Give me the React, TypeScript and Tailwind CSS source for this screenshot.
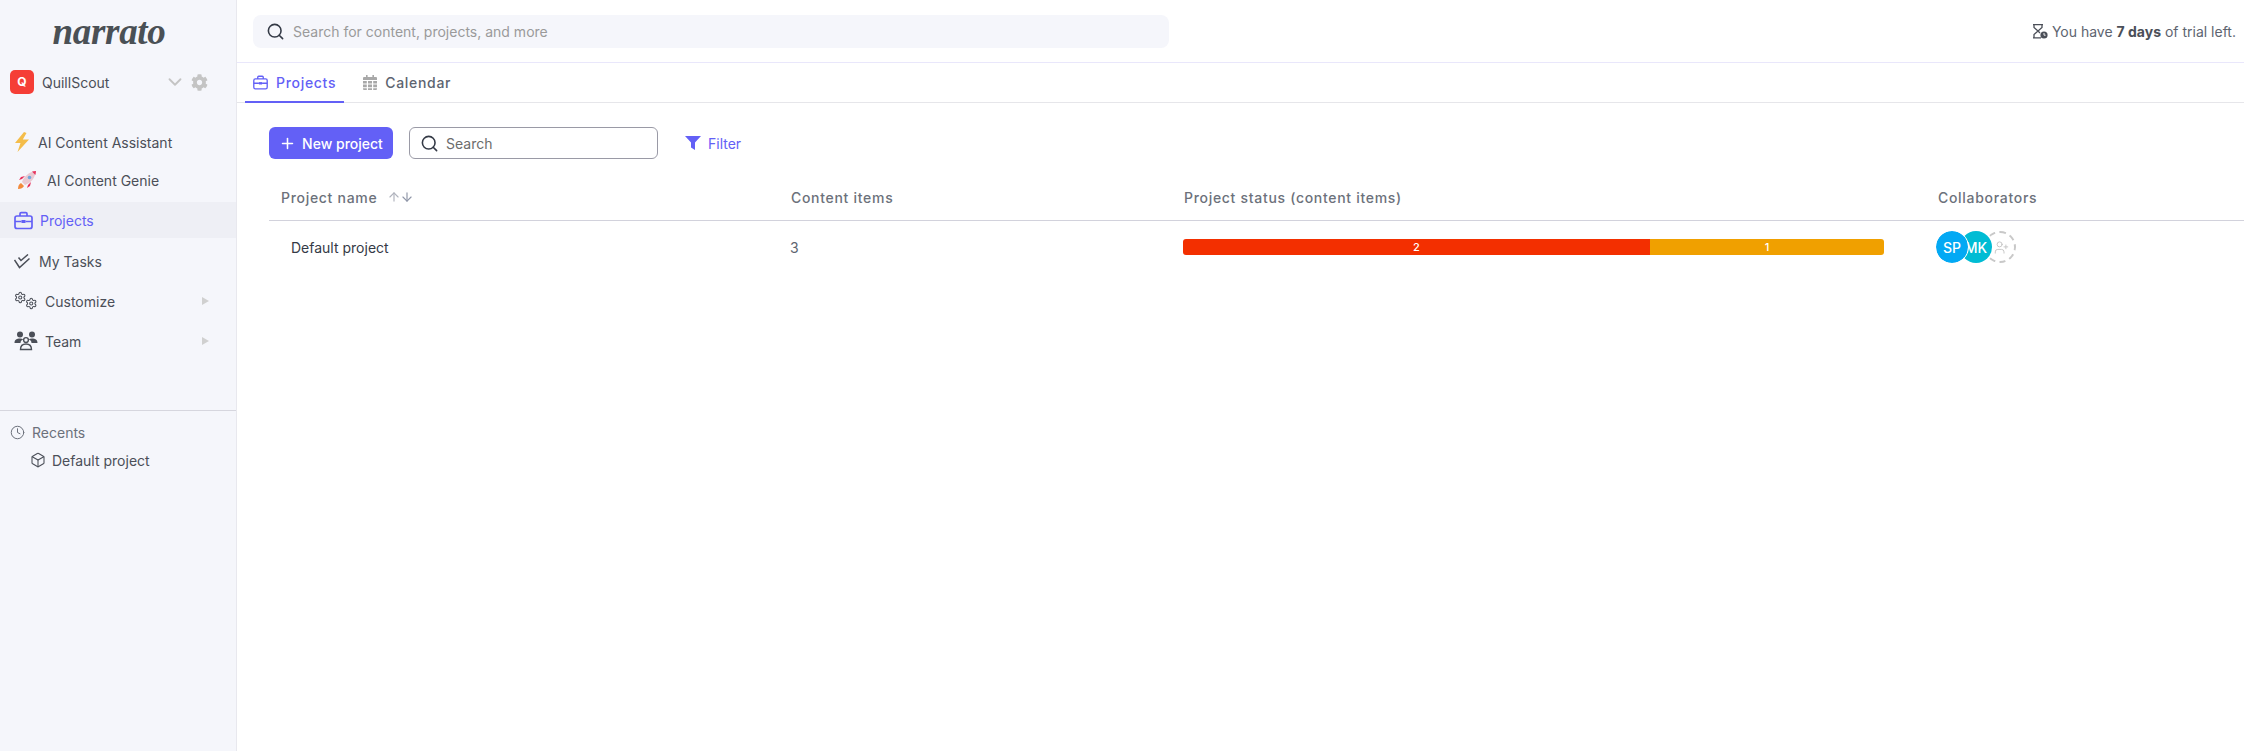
import { ArrowDown, ArrowUp, Box, ChevronDown, Clock, Plus, Search, Settings, UserPlus } from "lucide-react";
import { FaCog } from "react-icons/fa";

const font = { fontFamily: "Inter, 'Noto Sans', sans-serif" };

const Bolt = () => (
  <svg width="16" height="20" viewBox="0 0 16 20" className="shrink-0">
    <path d="M10 0 L1 11 L6.5 11 L3.5 20 L15 7.5 L8.8 7.5 L12.5 1 Z" fill="#f4bd4a" />
  </svg>
);

const Rocket = () => (
  <svg width="20" height="20" viewBox="0 0 20 20" className="shrink-0">
    <path d="M1 19 C1 16 2 14 4 13 L7 16 C6 18 4 19 1 19 Z" fill="#f28a3c" />
    <path d="M5 9 L2 10 L4 7 L8 6 Z" fill="#e8315b" />
    <path d="M11 15 L10 18 L13 16 L14 12 Z" fill="#e8315b" />
    <path d="M5 12 C7 6 12 2 19 1 C18 8 14 13 8 15 Z" fill="#e9c9d2" />
    <path d="M15 1.6 L19 1 L18.4 5 Z" fill="#e8315b" />
    <circle cx="12.5" cy="7.5" r="1.8" fill="#6fa8dc" />
  </svg>
);

const BriefcaseIcon = ({ size }: { size: number }) => (
  <svg width={size} height={size} viewBox="0 0 19 19" className="shrink-0" fill="none" stroke="currentColor" strokeWidth="1.7">
    <rect x="1" y="5" width="17" height="12.5" rx="2" />
    <path d="M6 5V2.8a1.2 1.2 0 0 1 1.2-1.2h4.6A1.2 1.2 0 0 1 13 2.8V5" />
    <path d="M1 10.5h6.5M11.5 10.5H18" />
    <rect x="7.5" y="9" width="4" height="3" fill="currentColor" stroke="none" />
  </svg>
);

const TasksIcon = () => (
  <svg width="16" height="15" viewBox="0 0 16 15" className="shrink-0" fill="none" stroke="#4b4f58" strokeWidth="1.5">
    <path d="M4.5 3.5 L7 6.5 L14 0.5" />
    <path d="M0.5 6 L5.5 13.5 L15.5 4.5" />
  </svg>
);

const TwoGears = () => (
  <div className="flex h-[20px] w-[23px] shrink-0 text-[#4b4f58]">
    <Settings size={13} strokeWidth={2} />
    <Settings size={13} strokeWidth={2} className="-ml-[2px] mt-[6px]" />
  </div>
);

const TeamIcon = () => (
  <svg width="24" height="20" viewBox="0 0 24 20" className="shrink-0" fill="#4b4f58">
    <circle cx="6" cy="3.4" r="3" />
    <circle cx="18" cy="3.4" r="3" />
    <path d="M0.5 12 C0.5 8.5 3 7.5 6 7.5 C7.5 7.5 8.6 7.8 9.3 8.4 C7.5 9 6.5 10.2 6.5 12 Z" />
    <path d="M23.5 12 C23.5 8.5 21 7.5 18 7.5 C16.5 7.5 15.4 7.8 14.7 8.4 C16.5 9 17.5 10.2 17.5 12 Z" />
    <circle cx="12" cy="9" r="2.4" fill="none" stroke="#4b4f58" strokeWidth="1.4" />
    <path d="M6.5 18.5 C6.5 14.5 9 13 12 13 C15 13 17.5 14.5 17.5 18.5 Z" fill="none" stroke="#4b4f58" strokeWidth="1.4" />
  </svg>
);

const CalendarIcon = () => (
  <svg width="14" height="15" viewBox="0 0 14 15" className="shrink-0" fill="#a8a8a8">
    <path d="M3 0h1.6v2H3zM9.4 0H11v2H9.4z" />
    <path d="M1 2h12a1 1 0 0 1 1 1v2H0V3a1 1 0 0 1 1-1z" />
    <path d="M0 6h3.8v2.6H0zM5 6h4v2.6H5zM10.2 6H14v2.6h-3.8zM0 9.6h3.8v2.6H0zM5 9.6h4v2.6H5zM10.2 9.6H14v2.6h-3.8zM0 13.2h3.8V15H1a1 1 0 0 1-1-1zM5 13.2h4V15H5zM10.2 13.2H14V14a1 1 0 0 1-1 1h-2.8z" />
  </svg>
);

const TrialIcon = () => (
  <svg width="16" height="15" viewBox="0 0 16 15" className="shrink-0">
    <path d="M1 .7h10M1 13.8h8M2 1v2.5L6 7 2 10.5V13.5M10 1v2.5L6 7l2 2" fill="none" stroke="#4b4f58" strokeWidth="1.3" />
    <circle cx="12" cy="11" r="3.6" fill="#4b4f58" />
    <path d="M12 9v2.2h1.6" fill="none" stroke="#fff" strokeWidth="0.9" />
  </svg>
);

const FilterIcon = () => (
  <svg width="16" height="14" viewBox="0 0 16 14" className="shrink-0">
    <path d="M0 0h16L10 6.5V14L6 11.5V6.5Z" fill="#6360f6" />
  </svg>
);

const Caret = () => <span className="ml-auto mr-[27px] h-0 w-0 border-y-[4px] border-l-[7px] border-y-transparent border-l-[#d0d0d0]" />;

const SideItem = ({ icon, label, className, caret }: { icon: React.ReactNode; label: string; className: string; caret?: boolean }) => (
  <div className={`flex items-center text-[14px] text-[#4b4f58] ${className}`}>
    {icon}
    <span>{label}</span>
    {caret && <Caret />}
  </div>
);

const Sidebar = () => (
  <aside className="flex w-[237px] shrink-0 flex-col border-r border-[#e8e8ee] bg-[#f5f6fb]">
    <div className="flex h-[70px] items-start justify-center pr-[18px] pt-[12px]">
      <span className="text-[37px] font-bold italic leading-[40px] tracking-[-0.3px] text-[#4a5055]" style={{ fontFamily: "'Liberation Serif', serif" }}>
        narrato
      </span>
    </div>
    <div className="flex h-[24px] items-center pl-[10px] text-[14px] text-[#4b4f58]">
      <span className="flex h-[24px] w-[24px] items-center justify-center rounded-[5px] bg-[#f53e36] text-[12px] font-bold text-white">Q</span>
      <span className="ml-[8px]">QuillScout</span>
      <ChevronDown size={22} className="ml-auto text-[#c4c4c4]" strokeWidth={2} />
      <FaCog size={17} className="ml-[5px] mr-[28px] text-[#c4c4c4]" />
    </div>
    <div className="mt-[30px] flex flex-col">
      <SideItem className="h-[36px] pl-[14px]" icon={<span className="mr-[8px] flex w-[16px]"><Bolt /></span>} label="AI Content Assistant" />
      <SideItem className="mt-[2px] h-[36px] pl-[17px]" icon={<span className="mr-[10px] flex"><Rocket /></span>} label="AI Content Genie" />
      <div className="mt-[4px] flex h-[36px] items-center bg-[#eeeff5] pl-[14px] text-[14px] text-[#6360f6]">
        <span className="mr-[7px] flex"><BriefcaseIcon size={19} /></span>
        <span>Projects</span>
      </div>
      <SideItem className="mt-[5px] h-[36px] pl-[14px]" icon={<span className="mr-[9px] flex"><TasksIcon /></span>} label="My Tasks" />
      <SideItem caret className="mt-[4px] h-[36px] pl-[14px]" icon={<span className="mr-[8px] flex"><TwoGears /></span>} label="Customize" />
      <SideItem caret className="mt-[4px] h-[36px] pl-[14px]" icon={<span className="mr-[7px] flex"><TeamIcon /></span>} label="Team" />
    </div>
    <div className="mt-[51px] border-t border-[#d6d6de] pl-[10px] pt-[11px] text-[14px]">
      <div className="flex h-[20px] items-center text-[#6c717b]">
        <Clock size={15} strokeWidth={1.6} className="mr-[7px]" />
        <span>Recents</span>
      </div>
      <div className="mt-[8px] flex h-[20px] items-center pl-[20px] text-[#4b4f58]">
        <Box size={16} strokeWidth={1.6} className="mr-[6px]" />
        <span>Default project</span>
      </div>
    </div>
  </aside>
);

const Header = () => (
  <header className="flex h-[63px] items-center border-b border-[#e9e7fb] pl-[16px] pr-[8px]">
    <div className="flex h-[33px] w-[916px] items-center rounded-lg bg-[#f5f6fb] pl-[13px]">
      <Search size={19} strokeWidth={2} className="text-[#343a46]" />
      <span className="ml-[8px] text-[14px] text-[#9a9a9a]">Search for content, projects, and more</span>
    </div>
    <div className="ml-auto flex items-center text-[14px] text-[#5d6470]">
      <TrialIcon />
      <span className="ml-[4px]">
        You have <b className="font-bold text-[#4b4f58]">7 days</b> of trial left.
      </span>
    </div>
  </header>
);

const Tabs = () => (
  <nav className="flex h-[40px] border-b border-[#e6e6ea] pl-[8px] text-[14px] font-medium tracking-[0.7px]">
    <div className="-mb-px flex items-center border-b-2 border-[#6360f6] pl-[8px] pr-[8px] text-[#6360f6]">
      <span className="mr-[8px] flex"><BriefcaseIcon size={15} /></span>
      <span>Projects</span>
    </div>
    <div className="ml-[19px] flex items-center text-[#5d6470]">
      <CalendarIcon />
      <span className="ml-[8px]">Calendar</span>
    </div>
  </nav>
);

const Toolbar = () => (
  <div className="flex items-center pl-[32px] pt-[24px]">
    <button className="flex h-[32px] w-[124px] items-center justify-center rounded-md bg-[#6360f6] text-[14px] font-medium text-white">
      <Plus size={17} strokeWidth={2.2} className="mr-[6px]" />
      New project
    </button>
    <div className="ml-[16px] flex h-[32px] w-[249px] items-center rounded-md border border-[#9a9aa6] pl-[10px]">
      <Search size={19} strokeWidth={2} className="text-[#343a46]" />
      <span className="ml-[7px] text-[14px] text-[#6c6c6c]">Search</span>
    </div>
    <div className="ml-[27px] flex items-center text-[14px] text-[#6360f6]">
      <FilterIcon />
      <span className="ml-[7px]">Filter</span>
    </div>
  </div>
);

const Table = () => (
  <div className="ml-[32px] mt-[23px]">
    <div className="grid h-[39px] grid-cols-[510px_393px_754px_1fr] items-center border-b border-[#d2d2dc] pl-[12px] pb-[8px] text-[14px] font-medium tracking-[0.7px] text-[#6c717b]">
      <div className="flex items-center">
        Project name
        <ArrowUp size={14} strokeWidth={2} className="ml-[10px] text-[#b0b3bd]" />
        <ArrowDown size={14} strokeWidth={2} className="-ml-[1px] text-[#8f96a8]" />
      </div>
      <div>Content items</div>
      <div>Project status (content items)</div>
      <div>Collaborators</div>
    </div>
    <div className="grid h-[52px] grid-cols-[510px_393px_754px_1fr] items-center pl-[12px] text-[14px]">
      <div className="pl-[10px] text-[#343a46]">Default project</div>
      <div className="-ml-[1px] text-[#5d6470]">3</div>
      <div className="-ml-[1px] flex h-[16px] w-[701px] overflow-hidden rounded-[3px] text-center text-[11px] font-medium leading-[16px] text-white">
        <div className="w-[467px] bg-[#f32f00]">2</div>
        <div className="flex-1 bg-[#f0a000]">1</div>
      </div>
      <div className="-ml-[2px] flex items-center">
        <span className="relative z-20 flex h-[32px] w-[32px] items-center justify-center rounded-full bg-[#03a9f4] text-[14px] font-medium text-white outline outline-1 outline-white">SP</span>
        <span className="relative z-10 -ml-[8px] flex h-[32px] w-[32px] items-center justify-center rounded-full bg-[#00bcd4] text-[14px] font-medium text-white">MK</span>
        <span className="-ml-[8px] flex h-[32px] w-[32px] items-center justify-center rounded-full border-2 border-dashed border-[#c8c8c8] bg-white pl-[2px]">
          <UserPlus size={15} strokeWidth={1.4} className="text-[#c0c0c0]" />
        </span>
      </div>
    </div>
  </div>
);

export default function App() {
  return (
    <div className="flex h-[751px] w-[2244px] overflow-hidden bg-white" style={font}>
      <Sidebar />
      <main className="flex min-w-0 flex-1 flex-col">
        <Header />
        <Tabs />
        <Toolbar />
        <Table />
      </main>
    </div>
  );
}
